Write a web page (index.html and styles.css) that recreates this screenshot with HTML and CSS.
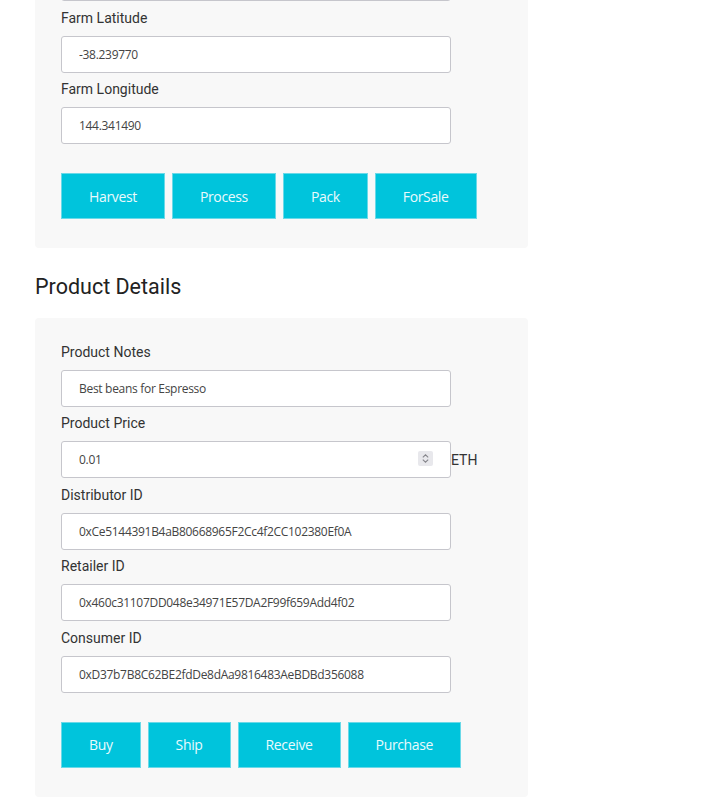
FILE: index.html
```html
<!DOCTYPE html>
<html lang="en">
<head>
<meta charset="utf-8">
<title>Supply Chain</title>
<link rel="stylesheet" href="styles.css">
</head>
<body>
<main class="page">
  <section class="card">
    <div class="field">
      <input class="input" type="text" value="" aria-label="Farm Information">
    </div>
    <div class="field">
      <label class="label">Farm Latitude</label>
      <input class="input" type="text" value="-38.239770">
    </div>
    <div class="field">
      <label class="label">Farm Longitude</label>
      <input class="input" type="text" value="144.341490">
    </div>
    <div class="actions">
      <button class="btn" type="button">Harvest</button>
      <button class="btn" type="button">Process</button>
      <button class="btn" type="button">Pack</button>
      <button class="btn" type="button">ForSale</button>
    </div>
  </section>

  <h2 class="section-title">Product Details</h2>

  <section class="card">
    <div class="field">
      <label class="label">Product Notes</label>
      <input class="input" type="text" value="Best beans for Espresso">
    </div>
    <div class="field">
      <label class="label">Product Price</label>
      <div class="price-row">
        <div class="price-wrap">
          <input class="input" type="text" value="0.01">
          <span class="spinner"><svg width="15" height="15" viewBox="0 0 15 15"><path d="M4.8 6.3 L7.5 3.8 L10.2 6.3" fill="none" stroke="#85858b" stroke-width="1.1"/><path d="M4.8 8.7 L7.5 11.2 L10.2 8.7" fill="none" stroke="#85858b" stroke-width="1.1"/></svg></span>
        </div>
        <span class="unit">ETH</span>
      </div>
    </div>
    <div class="field">
      <label class="label">Distributor ID</label>
      <input class="input" type="text" value="0xCe5144391B4aB80668965F2Cc4f2CC102380Ef0A">
    </div>
    <div class="field">
      <label class="label">Retailer ID</label>
      <input class="input" type="text" value="0x460c31107DD048e34971E57DA2F99f659Add4f02">
    </div>
    <div class="field">
      <label class="label">Consumer ID</label>
      <input class="input" type="text" value="0xD37b7B8C62BE2fdDe8dAa9816483AeBDBd356088">
    </div>
    <div class="actions">
      <button class="btn" type="button">Buy</button>
      <button class="btn" type="button">Ship</button>
      <button class="btn" type="button">Receive</button>
      <button class="btn" type="button">Purchase</button>
    </div>
  </section>
</main>
</body>
</html>
```

FILE: styles.css
```css
html, body {
  margin: 0;
  padding: 0;
  background: #ffffff;
}

body {
  font-family: Roboto, "Liberation Sans", sans-serif;
  color: #333333;
}

.page {
  width: 493px;
  margin: -60px 0 0 35px;
}

.card {
  background: #f8f8f8;
  border-radius: 4px;
  padding: 24px 26px 29px;
}

.field {
  margin-bottom: 6.5px;
}

.label {
  display: block;
  font-size: 14px;
  line-height: 20px;
  margin-bottom: 8px;
  color: #333333;
}

.input {
  display: block;
  box-sizing: border-box;
  width: 390px;
  height: 37px;
  margin: 0;
  padding: 0 0 0 17px;
  border: 1px solid #c6c6cc;
  border-radius: 3px;
  background: #ffffff;
  font-family: "Open Sans", "Liberation Sans", sans-serif;
  font-size: 12px;
  letter-spacing: -0.3px;
  color: #444444;
  outline: none;
}

.price-row {
  display: flex;
  align-items: center;
}

.price-wrap {
  position: relative;
}

.spinner {
  position: absolute;
  right: 18px;
  top: 10px;
  width: 15px;
  height: 15px;
  background: #e8e8ec;
  border-radius: 2px;
  display: flex;
}

.unit {
  margin-left: 0;
  font-size: 14px;
  color: #333333;
}

.actions {
  display: flex;
  gap: 7px;
  padding-top: 22.5px;
}

.btn {
  box-sizing: border-box;
  height: 46px;
  padding: 0 27px;
  border: 1px solid #6ad9e8;
  border-radius: 0;
  background: #00c4dc;
  color: #eafafc;
  font-family: "Open Sans", "Liberation Sans", sans-serif;
  font-size: 14px;
  letter-spacing: -0.35px;
  cursor: pointer;
}

.section-title {
  margin: 25.5px 0 18px;
  font-size: 21.5px;
  line-height: 26px;
  font-weight: 400;
  color: #222222;
}
```
